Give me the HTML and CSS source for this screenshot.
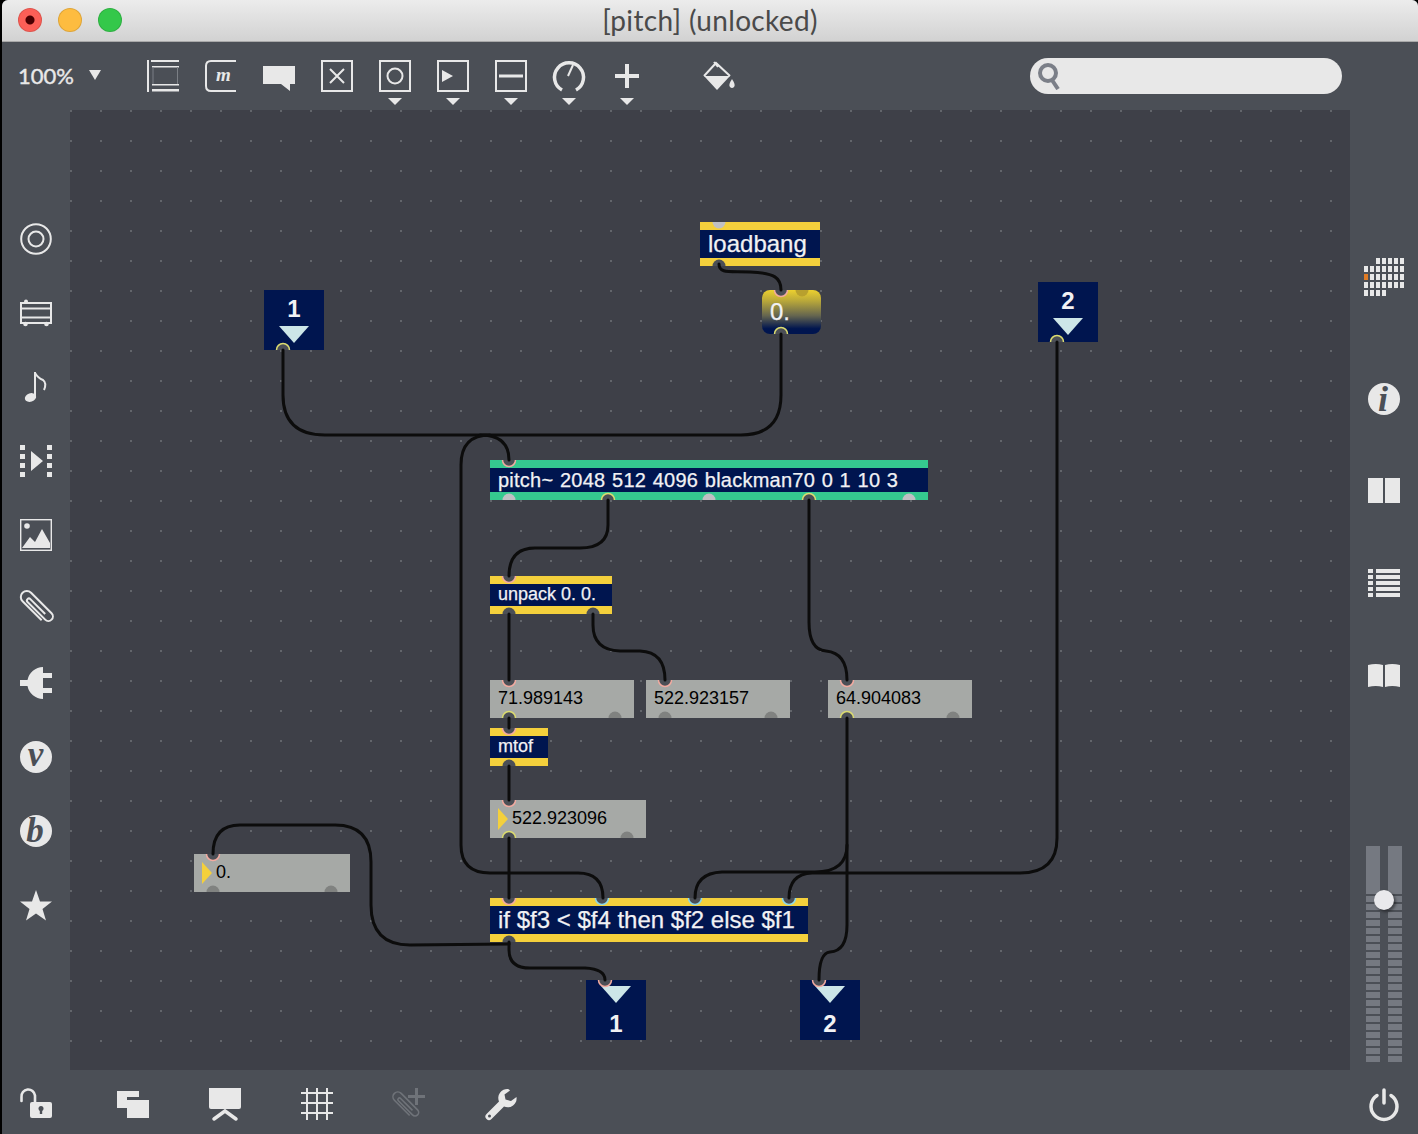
FILE: index.html
```html
<!DOCTYPE html>
<html lang="en">

<head>
    <meta charset="UTF-8">
    <meta name="viewport" content="width=device-width, initial-scale=1.0">
    <title>[pitch] (unlocked)</title>
    <link rel="stylesheet" href="styles.css">
</head>

<body>
    <div class="window">
        <div class="titlebar">
            <div class="lights">
                <span class="light red"></span>
                <span class="light yellow"></span>
                <span class="light green"></span>
            </div>
            <div class="title">[pitch] (unlocked)</div>
        </div>

        <div class="toolbar">
            <div class="zoom">100%<span class="zoom-arrow"></span></div>
            <div class="tools">
                <svg class="icon" viewBox="0 0 32 32">
                    <path d="M0 0h2v32H0zM4 0h28v2H4zM5 6h27v1.5H5zM5 24h27v1.5H5zM5 29h27v2.5H5z" />
                    <path class="faint" d="M6 7v17M30.5 7v17" />
                </svg>
                <svg class="icon" viewBox="0 0 32 32">
                    <path class="line" d="M31 1H6Q1 1 1 6V26Q1 31 6 31H31" />
                    <text class="glyph-m" x="18.5" y="21">m</text>
                </svg>
                <svg class="icon" viewBox="0 0 32 32">
                    <path d="M0 6H32V24H27V31L18 24H0Z" />
                </svg>
                <svg class="icon" viewBox="0 0 32 32">
                    <rect class="line" x="1" y="1" width="30" height="30" />
                    <path class="line" d="M9 9L23 23M23 9L9 23" />
                </svg>
                <div class="tool drop"><svg class="icon" viewBox="0 0 32 32">
                        <rect class="line" x="1" y="1" width="30" height="30" />
                        <circle class="line" cx="16" cy="16" r="7.5" />
                    </svg></div>
                <div class="tool drop"><svg class="icon" viewBox="0 0 32 32">
                        <rect class="line" x="1" y="1" width="30" height="30" />
                        <path d="M5 10L16 16L5 22Z" />
                    </svg></div>
                <div class="tool drop"><svg class="icon" viewBox="0 0 32 32">
                        <rect class="line" x="1" y="1" width="30" height="30" />
                        <path d="M4 14.5h24v3H4z" />
                    </svg></div>
                <div class="tool drop"><svg class="icon" viewBox="0 0 32 32">
                        <path class="line thick" d="M9 30A14.5 14.5 0 1 1 23 30" />
                        <path class="line" d="M15 16L20 5" />
                    </svg></div>
                <div class="tool drop"><svg class="icon" viewBox="0 0 32 32">
                        <path d="M14 4h4v10h10v4H18v10h-4V18H4v-4h10z" />
                    </svg></div>
                <svg class="icon bucket" viewBox="0 0 32 32">
                    <path class="line" d="M1 16L13 3L27 16M11 2L15 7" />
                    <path d="M1 16H27L14 30Z" />
                    <path d="M29 19Q33 25 31 27Q29 29 27 27Q25 25 29 19Z" />
                </svg>
            </div>
            <div class="search">
                <svg class="search-icon" viewBox="0 0 24 28">
                    <circle cx="10" cy="11" r="8" />
                    <path d="M14 18L20 27" />
                </svg>
            </div>
        </div>

        <div class="middle">
            <div class="sidebar left">
                <svg class="icon" viewBox="0 0 32 32">
                    <circle class="line" cx="16" cy="16" r="14.8" />
                    <circle class="line" cx="16" cy="16" r="7.5" />
                </svg>
                <svg class="icon" viewBox="0 0 32 32">
                    <rect class="line" x="1" y="6" width="30" height="20" />
                    <path d="M2 10.500h28v2H2zM2 19.500h28v2H2z" />
                    <circle cx="6" cy="4.500" r="2" />
                    <circle cx="5.500" cy="27" r="2.300" />
                    <circle cx="26.500" cy="27" r="2.300" />
                </svg>
                <svg class="icon" viewBox="0 0 32 32">
                    <ellipse cx="10.5" cy="26.5" rx="5.8" ry="4.2" transform="rotate(-18 10.5 26.5)" />
                    <path class="line" d="M15 27V1" />
                    <path class="line" d="M15 2Q18 7 23 9Q27 12 24 19" />
                </svg>
                <svg class="icon" viewBox="0 0 32 32">
                    <path d="M0 0h5v5H0zM0 9h5v5H0zM0 18h5v5H0zM0 27h5v5H0zM27 0h5v5h-5zM27 9h5v5h-5zM27 18h5v5h-5zM27 27h5v5h-5zM11 6L23 16L11 26Z" />
                </svg>
                <svg class="icon" viewBox="0 0 32 32">
                    <rect class="line hair" x="0.7" y="0.7" width="30.6" height="30.6" />
                    <circle cx="7" cy="7" r="2.8" />
                    <path d="M2 29L10 18L15 23L22 10L30 24V29Z" />
                </svg>
                <svg class="icon" viewBox="0 0 32 32">
                    <path class="line" transform="rotate(45 16 16) translate(-2 0)" d="M30 20H3a6 6 0 0 1 0-12H32a4.5 4.5 0 0 1 0 9H7a2 2 0 0 1 0-4H28" />
                </svg>
                <svg class="icon" viewBox="0 0 32 32">
                    <path d="M0 13h7.500A16 16 0 0 1 23 0V6h9v5h-9v10h9v5h-9V32A16 16 0 0 1 7.500 19H0Z" />
                </svg>
                <svg class="icon" viewBox="0 0 32 32">
                    <circle cx="16" cy="16" r="16" />
                    <text class="glyph-letter" x="15.5" y="25">v</text>
                </svg>
                <svg class="icon" viewBox="0 0 32 32">
                    <circle cx="16" cy="16" r="16" />
                    <text class="glyph-letter" x="15" y="27">b</text>
                </svg>
                <svg class="icon star" viewBox="0 0 32 32">
                    <path d="M16 0L20 11.500H32L22.500 19L26 30.500L16 23.500L6 30.500L9.500 19L0 11.500H12Z" />
                </svg>
            </div>

            <div class="canvas">
                <div class="obj box yellow o-loadbang big">loadbang</div>
                <div class="obj msg o-msg">0.</div>
                <div class="obj port-box o-in1"><span class="port-label">1</span><span class="tri"></span></div>
                <div class="obj port-box o-in2"><span class="port-label">2</span><span class="tri"></span></div>
                <div class="obj box mint o-pitch">pitch~ 2048 512 4096 blackman70 0 1 10 3</div>
                <div class="obj box yellow o-unpack small">unpack 0. 0.</div>
                <div class="obj num o-n1">71.989143</div>
                <div class="obj num o-n2">522.923157</div>
                <div class="obj num o-n3">64.904083</div>
                <div class="obj box yellow o-mtof small">mtof</div>
                <div class="obj num o-n4"><span class="num-arrow"></span>522.923096</div>
                <div class="obj num o-n5"><span class="num-arrow"></span>0.</div>
                <div class="obj box yellow o-if big">if $f3 &lt; $f4 then $f2 else $f1</div>
                <div class="obj port-box out o-out1"><span class="tri"></span><span class="port-label">1</span></div>
                <div class="obj port-box out o-out2"><span class="tri"></span><span class="port-label">2</span></div>

                <!-- page coordinates, so the numbers read the same as the objects -->
                <svg class="patch" viewBox="70 110 1280 960">
                    <defs>
                        <path id="pt" d="M-6.500 0A6.500 6.500 0 0 0 6.500 0" />
                        <path id="pb" d="M-6.500 0A6.500 6.500 0 0 1 6.500 0" />
                    </defs>
                    <g class="p-grey">
                        <use href="#pt" x="719" y="222" />
                        <use href="#pb" x="509" y="500" />
                        <use href="#pb" x="709" y="500" />
                        <use href="#pb" x="909" y="500" />
                    </g>
                    <g class="p-dull">
                        <use href="#pb" x="615" y="718" />
                        <use href="#pb" x="665" y="718" />
                        <use href="#pb" x="771" y="718" />
                        <use href="#pb" x="953" y="718" />
                        <use href="#pb" x="627" y="838" />
                        <use href="#pb" x="213" y="892" />
                        <use href="#pb" x="331" y="892" />
                    </g>
                    <use class="p-gold" href="#pt" x="802" y="290" />
                    <g class="p-dark">
                        <use href="#pb" x="719" y="266" />
                        <use href="#pb" x="509" y="614" />
                        <use href="#pb" x="593" y="614" />
                        <use href="#pb" x="509" y="766" />
                        <use href="#pb" x="509" y="942" />
                    </g>
                    <g class="p-pink">
                        <use href="#pt" x="781" y="290" />
                        <use href="#pt" x="509" y="460" />
                        <use href="#pt" x="509" y="576" />
                        <use href="#pt" x="509" y="680" />
                        <use href="#pt" x="665" y="680" />
                        <use href="#pt" x="847" y="680" />
                        <use href="#pt" x="509" y="728" />
                        <use href="#pt" x="509" y="800" />
                        <use href="#pt" x="213" y="854" />
                        <use href="#pt" x="509" y="898" />
                        <use href="#pt" x="605" y="980" />
                        <use href="#pt" x="819" y="980" />
                    </g>
                    <g class="p-lime">
                        <use href="#pb" x="781" y="334" />
                        <use href="#pb" x="283" y="350" />
                        <use href="#pb" x="1057" y="342" />
                        <use href="#pb" x="608" y="500" />
                        <use href="#pb" x="809" y="500" />
                        <use href="#pb" x="509" y="718" />
                        <use href="#pb" x="847" y="718" />
                        <use href="#pb" x="509" y="838" />
                    </g>
                    <g class="p-cyan">
                        <use href="#pt" x="602" y="898" />
                        <use href="#pt" x="695" y="898" />
                        <use href="#pt" x="789" y="898" />
                    </g>
                    <g class="wires">
                        <path d="M719 264C719 274 730 271 750 272C775 273 781 278 781 290" />
                        <path d="M283 350V395Q283 435 325 435H480Q509 435 509 460" />
                        <path d="M781 334V395Q781 435 741 435H480" />
                        <path d="M490 435Q461 435 461 465V845Q461 873 490 873H578Q603 873 603 898" />
                        <path d="M608 500V525Q608 548 580 548H535Q509 548 509 576" />
                        <path d="M809 500V622Q809 650 826 651Q847 653 847 680" />
                        <path d="M509 614V680" />
                        <path d="M593 614V625Q593 650 620 651H640Q665 652 665 680" />
                        <path d="M509 718V728" />
                        <path d="M509 766V800" />
                        <path d="M509 838V898" />
                        <path d="M847 718V925Q847 951 830 952Q819 953 819 980" />
                        <path d="M847 845Q847 872 815 872H722Q695 873 695 898" />
                        <path d="M1057 342V838Q1057 873 1020 873H812Q789 874 789 898" />
                        <path d="M509 944L410 945Q371 945 371 905V862Q371 825 335 825H240Q213 825 213 854" />
                        <path d="M509 942V950Q509 968 530 968H585Q605 969 605 980" />
                    </g>
                </svg>
            </div>

            <div class="sidebar right">
                <svg class="icon-grid" viewBox="0 0 40 38">
                    <path class="cells" d="M12 3H40M0 11H40M0 19H40M0 27H40M0 35H24" />
                    <rect class="cell-on" x="0" y="16" width="4" height="6" />
                </svg>
                <svg class="icon info" viewBox="0 0 32 32">
                    <circle cx="16" cy="16" r="16" />
                    <text class="glyph-i" x="15" y="28">i</text>
                </svg>
                <svg class="icon book" viewBox="0 0 32 26">
                    <path d="M0 0h15v25H0zM17 0h15v25H17z" />
                </svg>
                <svg class="icon list" viewBox="0 0 32 30">
                    <path d="M0 1h5v4H0zM8 1h24v4H8zM0 7h5v4H0zM8 7h24v4H8zM0 13h5v4H0zM8 13h24v4H8zM0 19h5v4H0zM8 19h24v4H8zM0 25h5v4H0zM8 25h24v4H8z" />
                </svg>
                <svg class="icon book-open" viewBox="0 0 32 24">
                    <path d="M0 1Q8 -1 15 1V23Q8 21 0 23zM17 1Q24 -1 32 1V23Q24 21 17 23z" />
                </svg>
                <div class="fader">
                    <div class="meter"></div>
                    <div class="meter"></div>
                    <div class="knob"></div>
                </div>
            </div>
        </div>

        <div class="bottombar">
            <svg class="icon unlock" viewBox="0 0 32 32">
                <path class="line round lock-bar" d="M1.500 13V9A6.500 6.500 0 0 1 15 7.500V14" />
                <rect x="10" y="14" width="22" height="16" rx="2" />
                <circle class="cut" cx="21" cy="20.500" r="2.500" />
                <path class="cut" d="M19.800 21h2.400v5h-2.400z" />
            </svg>
            <svg class="icon" viewBox="0 0 32 32">
                <path d="M0 3h22v6H10v11H0z" />
                <path d="M10 12h22v18H10z" />
            </svg>
            <svg class="icon" viewBox="0 0 32 32">
                <path d="M0 0h32v19q0 2-2 2H2q-2 0-2-2z" />
                <path class="line round thick" d="M5 31L16 23L27 31" />
            </svg>
            <svg class="icon" viewBox="0 0 32 32">
                <path class="line" d="M6 0V32M16 0V32M26 0V32M0 5H32M0 15H32M0 25H32" />
            </svg>
            <svg class="icon dim" viewBox="0 0 32 32">
                <path class="line" transform="rotate(45 11 19) translate(-3 5) scale(.8)" d="M30 20H3a6 6 0 0 1 0-12H32a4.500 4.500 0 0 1 0 9H7a2 2 0 0 1 0-4H28" />
                <path d="M22 0h3v7h7v3h-7v7h-3v-7h-7V7h7z" />
            </svg>
            <svg class="icon" viewBox="0 0 32 32">
                <path fill-rule="evenodd" d="M23 1A9 9 0 0 0 14 13.500L1.500 26A3.500 3.500 0 0 0 6.500 31L19 18.500A9 9 0 0 0 31.500 9L26 13L20.500 11.500L19.500 6.500L25 2.500Q24 1 23 1ZM3 28a1.500 1.500 0 1 0 3 0a1.500 1.500 0 1 0-3 0Z" />
            </svg>
            <svg class="icon power" viewBox="0 0 32 32">
                <path class="line round power-ring" d="M9 7.500A13 13 0 1 0 23 7.500" />
                <path class="line round power-ring" d="M16 2V15" />
            </svg>
        </div>
    </div>
</body>

</html>
```
FILE: styles.css
```css
* {
    box-sizing: border-box;
}

body {
    margin: 0;
    padding: 0;
    background: #000;
    font-family: "Liberation Sans", Arial, sans-serif;
    overflow: hidden;
}

.window {
    display: grid;
    grid-template-rows: 42px 68px 960px 64px;
    width: 1416px;
    height: 1134px;
    margin-left: 2px;
    border-radius: 6px 6px 0 0;
    overflow: hidden;
    background: #4b4f56;
}

/* title bar */
.titlebar {
    position: relative;
    display: flex;
    align-items: center;
    justify-content: center;
    padding-bottom: 2px;
    background: linear-gradient(#ececec, #d2d2d2);
    border-bottom: 1px solid #a9a9a9;
}

.lights {
    position: absolute;
    left: 16px;
    top: 8px;
    display: flex;
    gap: 16px;
}

.light {
    width: 24px;
    height: 24px;
    border-radius: 50%;
    border: 1px solid rgba(0, 0, 0, .12);
}

.light.red {
    background: radial-gradient(circle, #4a0002 0 4px, #fc5f57 5px);
}

.light.yellow {
    background: #fdbc40;
}

.light.green {
    background: #34c84a;
}

.title {
    font-family: Lato, sans-serif;
    font-size: 28px;
    letter-spacing: .35px;
    color: #4a4a4a;
}

/* toolbar */
.toolbar {
    display: flex;
    align-items: flex-start;
    padding: 18px 0 0 16px;
}

.zoom {
    display: flex;
    align-items: center;
    gap: 15px;
    width: 129px;
    height: 30px;
    font-family: Lato, sans-serif;
    font-size: 22px;
    -webkit-text-stroke: .4px #e8e8e8;
    color: #e8e8e8;
}

.zoom-arrow,
.tool.drop::after {
    width: 0;
    height: 0;
    border-style: solid;
    border-color: #e8e8e8 transparent transparent;
}

.zoom-arrow {
    border-width: 10px 6px 0;
}

.tools {
    display: flex;
    gap: 26px;
    width: 883px;
}

.tool {
    position: relative;
    height: 32px;
}

.tool.drop::after {
    content: "";
    position: absolute;
    left: 9px;
    top: 38px;
    border-width: 7px 7px 0;
}

.bucket {
    margin-left: 34px;
}

.search {
    display: flex;
    align-items: center;
    width: 312px;
    height: 36px;
    margin-top: -2px;
    border-radius: 18px;
    background: #e8e8e8;
    padding-left: 8px;
}

.search-icon {
    width: 24px;
    height: 28px;
    fill: none;
    stroke: #7b7f88;
    stroke-width: 4;
}

/* icons */
.icon {
    display: block;
    width: 32px;
    height: 32px;
    flex: none;
    fill: #e8e8e8;
    overflow: visible;
}

.line {
    fill: none;
    stroke: #e8e8e8;
    stroke-width: 2;
}

.thick {
    stroke-width: 3.5;
}

.hair {
    stroke-width: 1.4;
}

.round {
    stroke-linecap: round;
}

.faint {
    fill: none;
    stroke: #7b7f85;
    stroke-width: 1;
}

.cut {
    fill: #4b4f56;
}

.glyph-m {
    font-family: "Liberation Serif", serif;
    font-style: italic;
    font-weight: bold;
    font-size: 19px;
    text-anchor: middle;
    fill: #e8e8e8;
}

.glyph-letter {
    font-family: "Liberation Serif", serif;
    font-style: italic;
    font-weight: bold;
    font-size: 35px;
    text-anchor: middle;
    fill: #4b4f56;
}

.glyph-i {
    font-family: "Liberation Serif", serif;
    font-style: italic;
    font-weight: bold;
    font-size: 36px;
    text-anchor: middle;
    fill: #4b4f56;
}

.middle {
    display: grid;
    grid-template-columns: 68px 1280px 68px;
}

/* side columns */
.sidebar {
    display: flex;
    flex-direction: column;
    align-items: center;
}

.sidebar.left {
    padding: 113px 0 0 0;
    gap: 42px;
}

.star {
    margin-top: 1px;
}

.sidebar.right {
    padding: 148px 0 8px;
    height: 960px;
}

.icon-grid {
    width: 40px;
    height: 38px;
    flex: none;
}

.cells {
    fill: none;
    stroke: #e8e8e8;
    stroke-width: 6;
    stroke-dasharray: 4 2;
}

.cell-on {
    fill: #e07b24;
}

.info {
    margin-top: 87px;
}

.book {
    height: 26px;
    margin-top: 63px;
}

.list {
    height: 30px;
    margin-top: 64px;
}

.book-open {
    height: 24px;
    margin-top: 66px;
}

.fader {
    position: relative;
    display: flex;
    gap: 8px;
    margin-top: auto;
}

.meter {
    width: 14px;
    height: 216px;
    background:
        linear-gradient(#757981, #757981) top / 14px 48px no-repeat,
        repeating-linear-gradient(#757981 0 6px, transparent 6px 8px) 0 50px / 14px 166px no-repeat;
}

.knob {
    position: absolute;
    left: 8px;
    top: 44px;
    width: 20px;
    height: 20px;
    border-radius: 50%;
    background: #e9e9ec;
    box-shadow: 2px 2px 3px rgba(0, 0, 0, .45);
}

/* bottom bar */
.bottombar {
    display: flex;
    gap: 60px;
    padding: 18px 0 0 18px;
}

.unlock {
    margin-right: 5px;
}

.lock-bar {
    stroke-width: 2.6;
}

.power {
    margin-left: auto;
    margin-right: 18px;
}

.power-ring {
    stroke-width: 3.5;
}

.dim {
    fill: #6f7379;
}

.dim .line {
    stroke: #6f7379;
}

/* patcher canvas, a free canvas with objects placed by coordinates */
.canvas {
    position: relative;
    background-color: #3e4048;
    background-image: radial-gradient(circle at 1px 1px, #62656b 0.8px, transparent 1.2px);
    background-size: 30px 30px;
}

.patch {
    position: absolute;
    left: 0;
    top: 0;
    width: 1280px;
    height: 960px;
}

.obj {
    position: absolute;
    display: flex;
    align-items: center;
    padding-left: 8px;
    white-space: nowrap;
}

.box {
    border-style: solid;
    border-width: 8px 0;
    background: #00154f;
    color: #f1f1f4;
    -webkit-text-stroke: .25px #f1f1f4;
}

.box.yellow {
    border-color: #f4d03c;
}

.box.mint {
    border-color: #35c98f;
}

.big {
    font-size: 24px;
}

.small {
    font-size: 18px;
    padding-bottom: 2px;
}

.msg {
    border-radius: 8px;
    font-size: 24px;
    color: #f1f1f4;
    -webkit-text-stroke: .25px #f1f1f4;
    background: linear-gradient(#ecd02f 0, #b8a73a 25%, #66664f 58%, #00154f 88%);
}

.num {
    gap: 4px;
    height: 38px;
    font-size: 18px;
    padding-bottom: 1px;
    color: #000;
    background: #a6a9a6;
}

.num-arrow {
    width: 0;
    height: 0;
    border-style: solid;
    border-width: 11px 0 11px 10px;
    border-color: transparent transparent transparent #f4d03c;
}

.port-box {
    flex-direction: column;
    width: 60px;
    height: 60px;
    padding: 1px 0 0;
    background: #00154f;
}

.port-box.out {
    padding-top: 6px;
}

.port-label {
    font-size: 24px;
    font-weight: bold;
    line-height: 35px;
    color: #f1f1f4;
}

.out .port-label {
    margin-top: 5px;
    line-height: 31px;
}

.tri {
    width: 0;
    height: 0;
    border-style: solid;
    border-width: 17px 15px 0;
    border-color: #cde6e8 transparent transparent;
}

.o-loadbang {
    left: 630px;
    top: 112px;
    width: 120px;
    height: 44px;
}

.o-msg {
    left: 692px;
    top: 180px;
    width: 59px;
    height: 44px;
}

.o-in1 {
    left: 194px;
    top: 180px;
}

.o-in2 {
    left: 968px;
    top: 172px;
}

.o-pitch {
    left: 420px;
    top: 350px;
    width: 438px;
    height: 40px;
    font-size: 20px;
    letter-spacing: .25px;
    word-spacing: .75px;
}

.o-unpack {
    left: 420px;
    top: 466px;
    width: 122px;
    height: 38px;
}

.o-n1 {
    left: 420px;
    top: 570px;
    width: 144px;
}

.o-n2 {
    left: 576px;
    top: 570px;
    width: 144px;
}

.o-n3 {
    left: 758px;
    top: 570px;
    width: 144px;
}

.o-mtof {
    left: 420px;
    top: 618px;
    width: 58px;
    height: 38px;
}

.o-n4 {
    left: 420px;
    top: 690px;
    width: 156px;
}

.o-n5 {
    left: 124px;
    top: 744px;
    width: 156px;
}

.o-if {
    left: 420px;
    top: 788px;
    width: 318px;
    height: 44px;
}

.o-out1 {
    left: 516px;
    top: 870px;
}

.o-out2 {
    left: 730px;
    top: 870px;
}

/* ports, half discs sitting on an object's edge */
.p-grey {
    fill: #c0c0c4;
}

.p-dull {
    fill: #808280;
}

.p-gold {
    fill: #b8a02e;
}

.p-dark {
    fill: #4b4f56;
}

.p-pink {
    fill: #4b4f56;
    stroke: #f2aaa0;
    stroke-width: 1.5;
}

.p-lime {
    fill: #4b4f56;
    stroke: #dcdc70;
    stroke-width: 1.5;
}

.p-cyan {
    fill: #4b4f56;
    stroke: #8cd8ea;
    stroke-width: 1.5;
}

.wires {
    fill: none;
    stroke: #0c0c0c;
    stroke-width: 3;
    stroke-linecap: round;
}
```
